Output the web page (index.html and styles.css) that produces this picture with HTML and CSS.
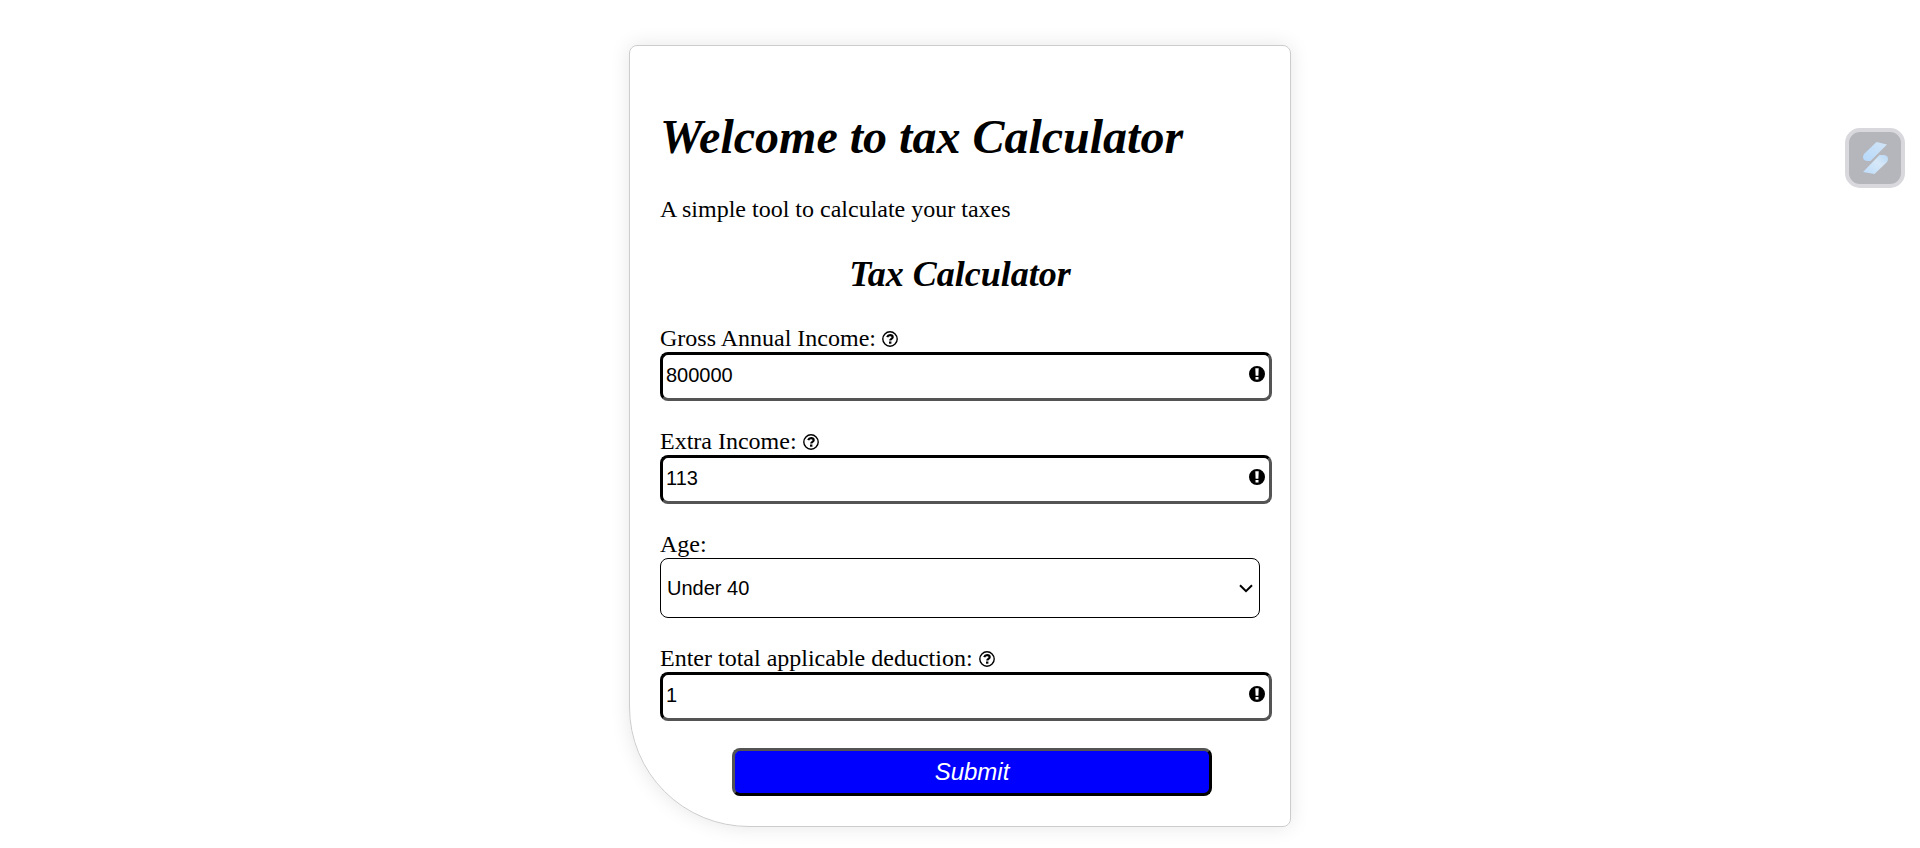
FILE: index.html
```html
<!DOCTYPE html>
<html lang="en">
<head>
<meta charset="utf-8">
<meta name="viewport" content="width=device-width, initial-scale=1">
<title>Tax Calculator</title>
<link rel="stylesheet" href="styles.css">
</head>
<body>
<svg class="symbols" aria-hidden="true">
  <symbol id="question" viewBox="0 0 16 16">
    <circle cx="8" cy="8" r="7.2" fill="none" stroke="currentColor" stroke-width="1.400"/>
    <path d="M5.200 6.200C5.700 4.800 6.800 4.200 8.100 4.200c1.500 0 2.600.8 2.600 2 0 1.700-2.500 1.600-2.500 3.300" fill="none" stroke="currentColor" stroke-width="2.200"/>
    <path d="M7 10.500h2.400v2.200H7z" fill="currentColor"/>
  </symbol>
  <symbol id="alert" viewBox="0 0 16 16">
    <path fill="currentColor" fill-rule="evenodd" d="M8 0a8 8 0 1 0 0 16A8 8 0 0 0 8 0zM6.300 2.200h3.400l-.3 7.500H6.600zM6.500 10.900h3v2.500h-3z"/>
  </symbol>
</svg>
<main class="card">
  <h1 class="title">Welcome to tax Calculator</h1>
  <p class="intro">A simple tool to calculate your taxes</p>
  <h2 class="subtitle">Tax Calculator</h2>
  <form class="form">
    <div class="field">
      <label class="label" for="income">Gross Annual Income: <svg class="icon"><use href="#question"/></svg></label>
      <div class="control">
        <input class="input" id="income" type="text" value="800000">
        <svg class="icon alert"><use href="#alert"/></svg>
      </div>
    </div>
    <div class="field">
      <label class="label" for="extra">Extra Income: <svg class="icon"><use href="#question"/></svg></label>
      <div class="control">
        <input class="input" id="extra" type="text" value="113">
        <svg class="icon alert"><use href="#alert"/></svg>
      </div>
    </div>
    <div class="field">
      <label class="label" for="age">Age:</label>
      <div class="picker">
        <select class="select" id="age">
          <option>Under 40</option>
        </select>
        <svg class="chevron" viewBox="0 0 14 9" aria-hidden="true"><path d="M1 1.200l6 6 6-6" fill="none" stroke="currentColor" stroke-width="2"/></svg>
      </div>
    </div>
    <div class="field">
      <label class="label" for="deduction">Enter total applicable deduction: <svg class="icon"><use href="#question"/></svg></label>
      <div class="control">
        <input class="input" id="deduction" type="text" value="1">
        <svg class="icon alert"><use href="#alert"/></svg>
      </div>
    </div>
    <button class="submit" type="submit">Submit</button>
  </form>
</main>
<button class="widget" type="button" aria-label="Open assistant">
  <svg class="widget-logo" viewBox="0 0 26 34">
    <defs>
      <linearGradient id="top" x1="1" y1="0" x2="0" y2="1"><stop offset="0" stop-color="#d3e5f6"/><stop offset="1" stop-color="#b5d8fb"/></linearGradient>
      <linearGradient id="bottom" x1="1" y1="0" x2="0" y2="1"><stop offset="0" stop-color="#b9d8f6"/><stop offset=".4" stop-color="#d6e8f8"/><stop offset="1" stop-color="#bddcfa"/></linearGradient>
    </defs>
    <path fill="url(#top)" d="M14.500 1L25 3.500 8.500 20H5q-4-.5-4-4 0-2 1.500-3.500z"/>
    <path fill="url(#bottom)" d="M17.500 14H22q4 .5 4 4 0 2-1.500 3.500L12.500 33 1 31z"/>
  </svg>
</button>
</body>
</html>
```
FILE: styles.css
```css
* {
  box-sizing: border-box;
}

body {
  margin: 0;
  padding: 45px 20px 20px;
  background: #fff;
  color: #000;
  font: 24px/27px "Liberation Serif", "Times New Roman", serif;
}

.symbols {
  display: none;
}

.card {
  max-width: 662px;
  margin: 0 auto;
  padding: 30px;
  border: 1px solid #ccc;
  border-radius: 8px 8px 8px 120px;
  box-shadow: 0 0 20px rgba(0, 0, 0, 0.1);
}

.title {
  margin: 33px 0 32px;
  font-size: 48px;
  font-style: italic;
  line-height: 55px;
}

.intro {
  margin: 0;
}

.subtitle {
  margin: 30px 0;
  font-size: 36px;
  font-style: italic;
  line-height: 42px;
  text-align: center;
}

.form {
  display: flex;
  flex-direction: column;
  gap: 27px;
}

.label {
  display: block;
}

.icon {
  width: 16px;
  height: 16px;
  vertical-align: -1px;
}

.control {
  position: relative;
  margin-right: -12px;
}

.input {
  display: block;
  width: 100%;
  height: 49px;
  padding: 0 30px 2px 3px;
  border: 3px inset #000;
  border-radius: 8px;
  background: #fff;
  color: #000;
  font: 20px "Liberation Sans", Arial, sans-serif;
}

.alert {
  position: absolute;
  top: 14px;
  right: 7px;
}

.picker {
  position: relative;
}

.select {
  display: block;
  width: 100%;
  height: 60px;
  padding: 0 30px 0 6px;
  appearance: none;
  border: 1px solid #000;
  border-radius: 8px;
  background: #fff;
  color: #000;
  font: 20px "Liberation Sans", Arial, sans-serif;
}

.chevron {
  position: absolute;
  top: 26px;
  right: 7px;
  width: 14px;
  height: 9px;
  pointer-events: none;
}

.submit {
  width: 80%;
  height: 48px;
  margin-left: 12%;
  padding: 0;
  border: 3px outset #000;
  border-radius: 8px;
  background: #00f;
  color: #fff;
  font: italic 24px "Liberation Sans", Arial, sans-serif;
}

.widget {
  position: fixed;
  top: 128px;
  right: 15px;
  display: grid;
  place-items: center;
  width: 60px;
  height: 60px;
  padding: 0;
  border: 4px solid #d8d8dd;
  border-radius: 15px;
  background: #b5b6bb;
}

.widget-logo {
  width: 26px;
  height: 34px;
}
```
